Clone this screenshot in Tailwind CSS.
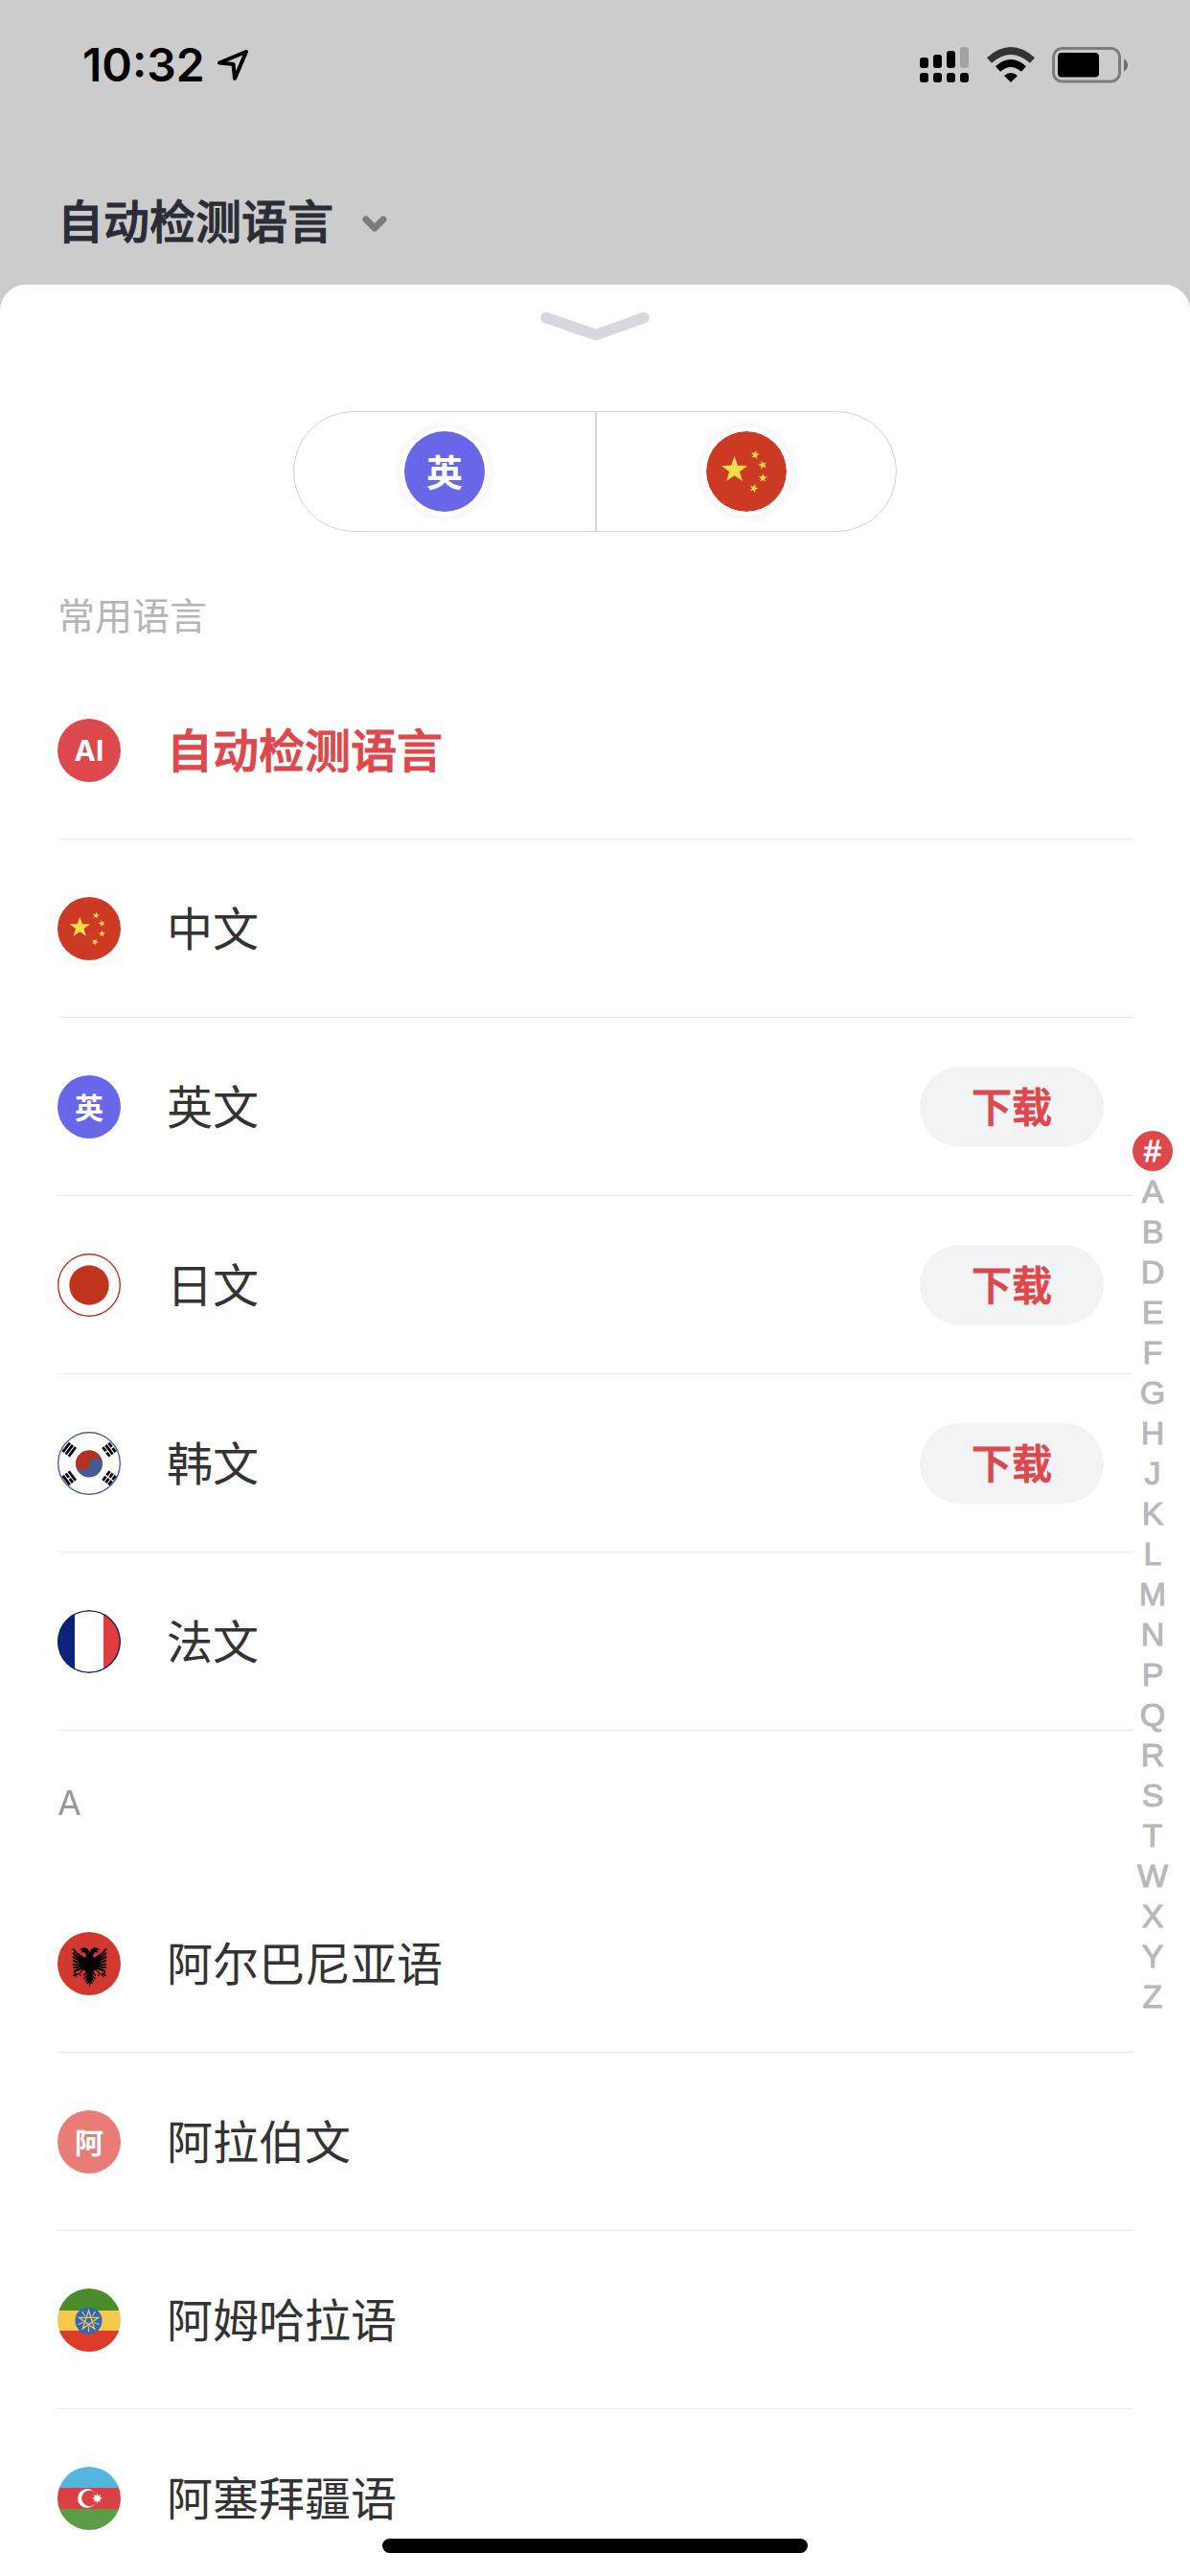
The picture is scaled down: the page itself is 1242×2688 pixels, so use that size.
<!DOCTYPE html>
<html lang="zh-CN">
<head>
    <meta charset="UTF-8">
    <meta name="viewport" content="width=device-width, initial-scale=1.0">
    <title>选择语言</title>
    <script src="https://cdn.jsdelivr.net/npm/@tailwindcss/browser@4"></script>
</head>
<body class="relative flex h-screen flex-col overflow-hidden bg-[#ccc] font-['Noto_Sans_CJK_SC',sans-serif] text-[#333]">

    <!-- Shared shapes -->
    <svg class="hidden" aria-hidden="true">
        <symbol id="star" viewBox="-10 -10 20 20">
            <path d="M0-10 2.4-3.2 9.5-3.1 3.8 1.2 5.9 8.1 0 4-5.9 8.1-3.8 1.2-9.5-3.1-2.4-3.2z"/>
        </symbol>
        <symbol id="flag-cn" viewBox="0 0 66 66">
            <circle cx="33" cy="33" r="33" fill="#cc3a24"/>
            <g fill="#f9dc4a">
                <use href="#star" x="12" y="20.500" width="22.500" height="22.500"/>
                <use href="#star" x="36.500" y="15.500" width="7.500" height="7.500" transform="rotate(12 40 19)"/>
                <use href="#star" x="42.500" y="24" width="7.500" height="7.500" transform="rotate(-16 46 27.500)"/>
                <use href="#star" x="42.800" y="34.500" width="7.500" height="7.500" transform="rotate(4 46 38)"/>
                <use href="#star" x="35.500" y="43" width="7.500" height="7.500" transform="rotate(20 39 46.500)"/>
            </g>
        </symbol>
    </svg>

    <!-- Status bar -->
    <div class="flex h-[132px] shrink-0 items-center justify-between pt-1 pr-[64px] pl-[86px] text-black">
        <div class="flex items-center gap-3">
            <span class="font-['Inter',sans-serif] text-[48px] leading-[56px] font-semibold">10:32</span>
            <svg class="h-[34px] w-[34px]" viewBox="0 0 34 34" fill="none" stroke="#000" stroke-width="4" stroke-linejoin="round">
                <path d="M31 3 3 14.500 17.500 16 19 31z"/>
            </svg>
        </div>
        <div class="flex items-center">
            <svg class="h-[38px] w-[52px]" viewBox="0 0 52 38">
                <rect x="0" y="11" width="9" height="11" rx="3"/>
                <rect x="14" y="8" width="9" height="14" rx="3"/>
                <rect x="28" y="4" width="9" height="18" rx="3"/>
                <rect x="42" y="0" width="9" height="22" rx="3" fill="#a3a3a3"/>
                <rect x="0" y="27" width="9" height="10" rx="3"/>
                <rect x="14" y="27" width="9" height="10" rx="3"/>
                <rect x="28" y="27" width="9" height="10" rx="3"/>
                <rect x="42" y="27" width="9" height="10" rx="3"/>
            </svg>
            <svg class="ml-[18px] h-[38px] w-[50px]" viewBox="0 0 50 38" fill="none">
                <path d="M2.500 14Q25-6 47.500 14" stroke="#333" stroke-width="7.500"/>
                <path d="M11.500 23Q25 11 38.500 23" stroke="#000" stroke-width="7.500"/>
                <path d="M18 30Q25 24 32 30L25 37z" fill="#000"/>
            </svg>
            <svg class="ml-[18px] h-[38px] w-[80px]" viewBox="0 0 80 38">
                <rect x="1.500" y="1.500" width="69" height="34.500" rx="9" fill="none" stroke="#7c7c7c" stroke-width="3"/>
                <rect x="6" y="6" width="43" height="25.500" rx="4"/>
                <path d="M75 12.500Q79 15 79 19T75 25.500z" fill="#6b6b6b"/>
            </svg>
        </div>
    </div>

    <!-- Page behind the sheet -->
    <header class="flex h-[165px] shrink-0 items-start px-[60px] pt-[60px]">
        <button class="flex items-center gap-[30px] text-[48px] leading-[72px] font-medium text-[#2a2d35]">
            <span class="pb-3 [-webkit-text-stroke:1px]">自动检测语言</span>
            <svg class="h-[18px] w-[26px]" viewBox="0 0 26 18" fill="none" stroke="#7b7b7d" stroke-width="7" stroke-linecap="round" stroke-linejoin="round">
                <path d="M4 4 13 13 22 4"/>
            </svg>
        </button>
    </header>

    <!-- Bottom sheet -->
    <main class="flex min-h-0 flex-1 flex-col rounded-t-[27px] bg-white">
        <button class="mx-auto mt-7 shrink-0" aria-label="收起">
            <svg class="h-[31px] w-[114px]" viewBox="0 0 114 31" fill="none" stroke="#d5d8e0" stroke-width="11.500" stroke-linecap="round">
                <path d="M6 6.500 58 24.500 108 6.500"/>
            </svg>
        </button>

        <div class="mx-auto mt-[73px] grid h-[126px] w-[630px] shrink-0 grid-cols-2 rounded-full border border-[#d0d3da]">
            <button class="flex items-center justify-center" aria-label="英文">
                <span class="flex size-[84px] items-center justify-center rounded-full bg-[#6867ea] pb-0.5 text-[38px] leading-none font-bold text-white shadow-[0_0_0_5px_#fff,0_0_10px_5px_rgba(0,0,0,0.08)]">英</span>
            </button>
            <button class="flex items-center justify-center border-l-2 border-[#d5d8e0]" aria-label="中文">
                <svg class="size-[84px] rounded-full shadow-[0_0_0_5px_#fff,0_0_10px_5px_rgba(0,0,0,0.08)]"><use href="#flag-cn"/></svg>
            </button>
        </div>

        <div class="relative mt-[41px] min-h-0 flex-1">
            <div class="h-full overflow-y-auto pr-[60px] pl-[60px] [scrollbar-width:none]">
                <h2 class="flex h-[94px] items-center pb-1.5 text-[39px] text-[#b5b5b5]">常用语言</h2>
                <ul class="text-[48px] leading-[72px]">
                    <li class="flex h-[186px] items-center gap-12 border-b border-[#e9e9eb] font-medium text-[#dc484b]">
                        <span class="flex size-[66px] items-center justify-center rounded-full bg-[#dc484b] font-['Inter',sans-serif] text-[30px] leading-none font-bold text-white">AI</span>
                        <span class="pb-1.5 [-webkit-text-stroke:1px]">自动检测语言</span>
                    </li>
                    <li class="flex h-[186px] items-center gap-12 border-b border-[#e9e9eb]">
                        <svg class="size-[66px]"><use href="#flag-cn"/></svg>
                        <span class="pb-1.5">中文</span>
                    </li>
                    <li class="flex h-[186px] items-center gap-12 border-b border-[#e9e9eb] pr-[30px]">
                        <span class="flex size-[66px] items-center justify-center rounded-full bg-[#6867ea] pb-0.5 text-[30px] leading-none font-bold text-white">英</span>
                        <span class="pb-1.5">英文</span>
                        <button class="ml-auto h-[84px] w-[192px] rounded-full bg-[#f2f3f5] pb-1 text-[42px] font-medium text-[#dc484b] [-webkit-text-stroke:1px]">下载</button>
                    </li>
                    <li class="flex h-[186px] items-center gap-12 border-b border-[#e9e9eb] pr-[30px]">
                        <svg class="size-[66px]" viewBox="0 0 66 66">
                            <circle cx="33" cy="33" r="32.300" fill="#fff" stroke="#c2341e" stroke-width="1.400"/>
                            <circle cx="33" cy="33" r="20.700" fill="#c0331c"/>
                        </svg>
                        <span class="pb-1.5">日文</span>
                        <button class="ml-auto h-[84px] w-[192px] rounded-full bg-[#f2f3f5] pb-1 text-[42px] font-medium text-[#dc484b] [-webkit-text-stroke:1px]">下载</button>
                    </li>
                    <li class="flex h-[186px] items-center gap-12 border-b border-[#e9e9eb] pr-[30px]">
                        <svg class="size-[66px]" viewBox="0 0 66 66">
                            <circle cx="33" cy="33" r="32.300" fill="#fff" stroke="#4d619e" stroke-width="1.400"/>
                            <g transform="rotate(5 33 33.500)">
                                <circle cx="33" cy="33.500" r="14" fill="#465a92"/>
                                <path d="M19 33.500a14 14 0 0 1 28 0a7 7 0 0 0-14 0a7 7 0 0 1-14 0z" fill="#b8311b"/>
                            </g>
                            <g stroke="#000" stroke-width="2.800">
                                <path d="M-6-3.800H6M-6 0H6M-6 3.800H6" transform="translate(12.300 18.700) rotate(-53)"/>
                                <path d="M-6-3.800H-.7M.7-3.800H6M-6 0H6M-6 3.800H-.7M.7 3.800H6" transform="translate(54 18.700) rotate(53)"/>
                                <path d="M-6-3.800H6M-6 0H-.7M.7 0H6M-6 3.800H6" transform="translate(12.300 48.300) rotate(53)"/>
                                <path d="M-6-3.800H-.7M.7-3.800H6M-6 0H-.7M.7 0H6M-6 3.800H-.7M.7 3.800H6" transform="translate(54 48.300) rotate(-53)"/>
                            </g>
                        </svg>
                        <span class="pb-1.5">韩文</span>
                        <button class="ml-auto h-[84px] w-[192px] rounded-full bg-[#f2f3f5] pb-1 text-[42px] font-medium text-[#dc484b] [-webkit-text-stroke:1px]">下载</button>
                    </li>
                    <li class="flex h-[186px] items-center gap-12 border-b border-[#e9e9eb]">
                        <svg class="size-[66px] rounded-full" viewBox="0 0 66 66">
                            <path d="M0 0h66v66H0z" fill="#fff"/>
                            <path d="M0 0h18v66H0z" fill="#0c2478"/>
                            <path d="M48 0h18v66H48z" fill="#e03e3d"/>
                            <circle cx="33" cy="33" r="32.300" fill="none" stroke="#0c2478" stroke-width="1.400"/>
                        </svg>
                        <span class="pb-1.5">法文</span>
                    </li>
                </ul>

                <h2 class="flex h-[150px] items-center font-['Inter',sans-serif] text-[36px] text-[#999]">A</h2>
                <ul class="text-[48px] leading-[72px]">
                    <li class="flex h-[186px] items-center gap-12 border-b border-[#e9e9eb]">
                        <svg class="size-[66px]" viewBox="0 0 66 66">
                            <circle cx="33" cy="33" r="33" fill="#d13830"/>
                            <!-- Two-headed eagle, left half mirrored -->
                            <g id="eagle-half">
                                <path d="M34 23Q32.500 16.500 28 16.300Q24.500 16.500 22.500 19L26.500 18.800 24 21.500 28 21.300Q30.500 23 29.500 26Q27.500 27.500 25.500 24.500L22 23 22.500 32 24 37.500 28 39.500 30.500 43 30.500 49 34 57z"/>
                                <g fill="none" stroke="#000" stroke-width="1.900">
                                    <path d="M25 26Q20 22.500 16 17.500M25 28Q19 25.500 16 21.500M25 30Q19 28.500 16 25.500M25 32Q19 31.500 16 29.500M25 34Q19 34.500 16 33.300M25 35.500Q19 37.300 16 37M26 37.500Q20 40 17 41"/>
                                </g>
                                <g fill="none" stroke="#000" stroke-width="1.300">
                                    <path d="M28 38.500Q25 40.500 23 43.500L19 44 16 46M20 44 17 42M20 44 19 47M23 43.500 24.500 46M30.500 42 27 45.500M31 45 27.500 49M31.500 48 29 51.500M32.500 50 30.500 54"/>
                                </g>
                            </g>
                            <use href="#eagle-half" transform="matrix(-1 0 0 1 67 0)"/>
                        </svg>
                        <span class="pb-1.5">阿尔巴尼亚语</span>
                    </li>
                    <li class="flex h-[186px] items-center gap-12 border-b border-[#e9e9eb]">
                        <span class="flex size-[66px] items-center justify-center rounded-full bg-[#ea7c78] pb-0.5 text-[30px] leading-none font-bold text-white">阿</span>
                        <span class="pb-1.5">阿拉伯文</span>
                    </li>
                    <li class="flex h-[186px] items-center gap-12 border-b border-[#e9e9eb]">
                        <svg class="size-[66px] rounded-full" viewBox="0 0 66 66">
                            <path d="M0 0h66v23H0z" fill="#4a8c29"/>
                            <path d="M0 23h66v21H0z" fill="#f6c94d"/>
                            <path d="M0 44h66v22H0z" fill="#dc3d2b"/>
                            <circle cx="32.500" cy="33.500" r="14" fill="#2f67b9"/>
                            <g transform="translate(32.500 33.500)" fill="none" stroke="#f6c94d" stroke-width="1.300">
                                <path d="M0-10.500 6.200 8.500-10-3.200H10L-6.200 8.500z"/>
                                <path d="M0 6V11.500M-5.700 2-11 4M5.700 2 11 4M-4-5-7-9.500M4-5 7-9.500"/>
                            </g>
                        </svg>
                        <span class="pb-1.5">阿姆哈拉语</span>
                    </li>
                    <li class="flex h-[186px] items-center gap-12 border-b border-[#e9e9eb]">
                        <svg class="size-[66px] rounded-full" viewBox="0 0 66 66">
                            <path d="M0 0h66v22H0z" fill="#54b5df"/>
                            <path d="M0 22h66v22H0z" fill="#da3f44"/>
                            <path d="M0 44h66v22H0z" fill="#5b9c47"/>
                            <circle cx="31" cy="33" r="10" fill="#fff"/>
                            <circle cx="33.500" cy="33" r="8.300" fill="#da3f44"/>
                            <path d="M41.500 28.300 42.400 30.800 44.800 29.700 43.700 32.100 46.200 33 43.700 33.900 44.800 36.300 42.400 35.200 41.500 37.700 40.600 35.200 38.200 36.300 39.300 33.900 36.800 33 39.300 32.100 38.200 29.700 40.600 30.800z" fill="#fff" stroke="#fff" stroke-width=".6"/>
                        </svg>
                        <span class="pb-1.5">阿塞拜疆语</span>
                    </li>
                </ul>
            </div>

            <!-- Letter index -->
            <nav class="absolute inset-y-0 right-[18px] flex flex-col justify-center text-center font-['Liberation_Sans',sans-serif] text-[34px] leading-[42px] text-[#b8b8b8] [-webkit-text-stroke:1px]" aria-label="字母索引">
                <a href="#" class="size-[42px] rounded-full bg-[#dc484b] text-[32px] text-white">#</a>
                <a href="#A">A</a>
                <a href="#B">B</a>
                <a href="#D">D</a>
                <a href="#E">E</a>
                <a href="#F">F</a>
                <a href="#G">G</a>
                <a href="#H">H</a>
                <a href="#J">J</a>
                <a href="#K">K</a>
                <a href="#L">L</a>
                <a href="#M">M</a>
                <a href="#N">N</a>
                <a href="#P">P</a>
                <a href="#Q">Q</a>
                <a href="#R">R</a>
                <a href="#S">S</a>
                <a href="#T">T</a>
                <a href="#W">W</a>
                <a href="#X">X</a>
                <a href="#Y">Y</a>
                <a href="#Z">Z</a>
            </nav>
        </div>
    </main>

    <!-- Home indicator -->
    <div class="absolute bottom-6 left-1/2 h-[15px] w-[444px] -translate-x-1/2 rounded-full bg-black"></div>

</body>
</html>
